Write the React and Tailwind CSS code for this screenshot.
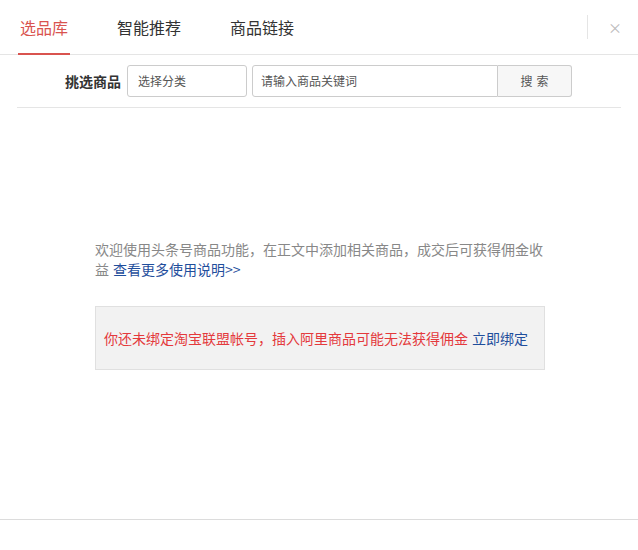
import React from 'react';

const tabs = ['选品库', '智能推荐', '商品链接'];

export default function App() {
  return (
    <div
      className="w-[638px] h-[550px] bg-white relative text-[#333]"
      style={{ fontFamily: '"Noto Sans CJK SC", "Noto Sans", sans-serif' }}
    >
      {/* Tabs header */}
      <div className="h-[55px] border-b border-[#e5e5e5] flex items-stretch pl-[18px] pr-[18px]">
        {tabs.map((t, i) => (
          <div
            key={t}
            className={`flex items-center text-[16px] mr-[45px] border-b-2 -mb-px ${
              i === 0 ? 'text-[#d9534f] border-[#d9534f]' : 'text-[#333] border-transparent'
            }`}
          >
            <span className="px-[2px]">{t}</span>
          </div>
        ))}
        <div className="flex-1" />
        <div className="flex items-center">
          <div className="w-px h-[24px] bg-[#e5e5e5] mr-[20px]" />
          <span className="text-[#bbb] text-[14px] leading-none mr-[-2px]">×</span>
        </div>
      </div>

      {/* Search row */}
      <div className="mx-[17px] pt-[10px] pb-[10px] border-b border-[#e5e5e5] flex items-center">
        <span className="ml-[48px] mr-[6px] text-[14px] font-bold text-[#333]">挑选商品</span>
        <div className="w-[120px] h-[32px] border border-[#ccc] rounded-[3px] flex items-center pl-[10px] text-[12px] text-[#555]">
          选择分类
        </div>
        <div className="ml-[5px] w-[246px] h-[32px] border border-[#ccc] rounded-l-[3px] flex items-center pl-[8px] text-[12px] text-[#555]">
          请输入商品关键词
        </div>
        <div className="w-[74px] h-[32px] border border-l-0 border-[#ccc] rounded-r-[3px] bg-[#f7f7f7] flex items-center justify-center text-[12px] text-[#555] tracking-[4px] pl-[4px]">
          搜索
        </div>
      </div>

      {/* Body */}
      <div className="ml-[95px] w-[450px] pt-[131px]">
        <div className="text-[14px] leading-[20px] text-[#888]">
          <div>欢迎使用头条号商品功能，在正文中添加相关商品，成交后可获得佣金收</div>
          <div className="flex gap-[4px]">
            <span>益</span>
            <span className="text-[#1f4e9c]">查看更多使用说明&gt;&gt;</span>
          </div>
        </div>
        <div className="mt-[27px] h-[64px] bg-[#f2f2f2] border border-[#e0e0e0] flex items-center pl-[8px] text-[14px]">
          <span className="text-[#e4393c]">你还未绑定淘宝联盟帐号，插入阿里商品可能无法获得佣金</span>
          <span className="text-[#1f4e9c] ml-[4px]">立即绑定</span>
        </div>
      </div>

      {/* Footer line */}
      <div className="absolute left-0 right-0 top-[519px] border-t border-[#dcdcdc]" />
    </div>
  );
}
